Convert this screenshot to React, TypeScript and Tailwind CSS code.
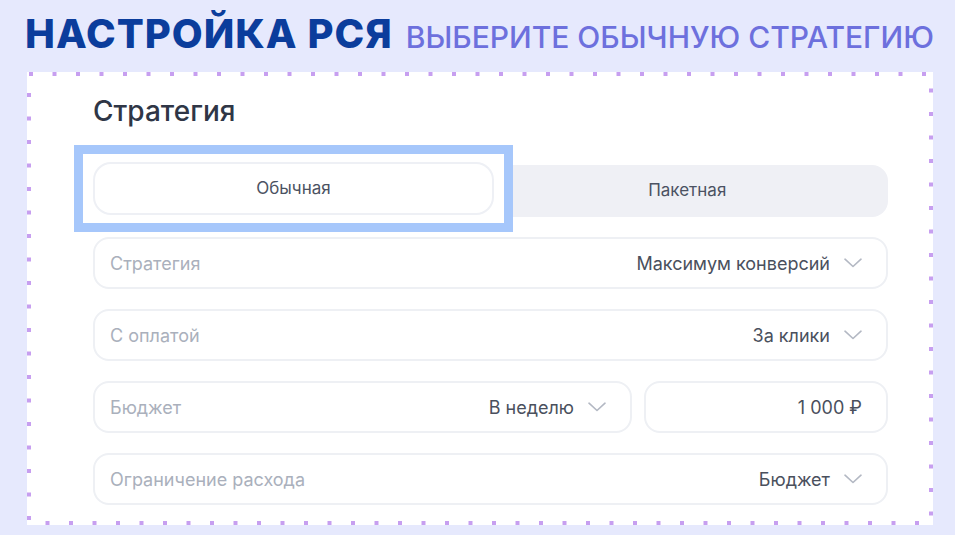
import { ReactNode } from "react";

function Chevron() {
  return (
    <svg width="18" height="10" viewBox="0 0 18 10" fill="none" className="shrink-0">
      <path d="M1 1.2l8 7.3 8-7.3" stroke="#b3b8c3" strokeWidth="1.6" strokeLinecap="round" strokeLinejoin="round" />
    </svg>
  );
}

function Field({ label, children, className }: { label?: string; children: ReactNode; className?: string }) {
  return (
    <div
      className={
        "h-[52px] flex items-center justify-between rounded-[16px] border-2 border-[#eef0f4] bg-white pl-[15px] pr-[24px] " +
        (className || "")
      }
    >
      <span className="text-[#aab0bc]">{label}</span>
      <div className="flex items-center gap-[14px] text-[#4a505d]">{children}</div>
    </div>
  );
}

function App() {
  return (
    <div
      className="w-[955px] h-[535px] overflow-hidden bg-[#e6e9fd] pt-[14px]"
      style={{ fontFamily: "Inter, 'Noto Sans', sans-serif" }}
    >
      <div className="flex items-baseline gap-[13px] pl-[25px] h-[58px]">
        <h1 className="text-[40px] font-extrabold text-[#0b3d9c] tracking-[1px] leading-none">НАСТРОЙКА РСЯ</h1>
        <span className="text-[30px] font-medium text-[#6d70dd] leading-none">ВЫБЕРИТЕ ОБЫЧНУЮ СТРАТЕГИЮ</span>
      </div>

      <div className="relative ml-[27px] w-[906px] h-[453px] bg-white pl-[66px] pr-[45px] pt-[22px] text-[18px]">
        <svg className="absolute inset-0 pointer-events-none" width="906" height="453">
          <rect
            x="2"
            y="2"
            width="902"
            height="449"
            fill="none"
            stroke="#c79ff0"
            strokeWidth="4"
            strokeDasharray="4 19.5"
          />
        </svg>

        <h2 className="text-[28px] font-medium text-[#2f3646] leading-[34px]">Стратегия</h2>

        <div className="relative mt-[37px] h-[52px] rounded-[16px] bg-[#eff0f5] grid grid-cols-2 p-[4px] text-[17px]">
          <div className="rounded-[14px] bg-white" />
          <div className="flex items-center justify-center text-[#4b5262]">Пакетная</div>
          <div className="absolute left-[-19px] top-[-20px] w-[439px] h-[87px] border-[9px] border-[#a6c7fb] bg-white flex items-center justify-center">
            <div className="w-[397px] h-[49px] rounded-[16px] ring-2 ring-[#eef0f5] flex items-center justify-center text-[#4b5262]">
              Обычная
            </div>
          </div>
        </div>

        <div className="mt-[20px] flex flex-col gap-[20px]">
          <Field label="Стратегия">
            <span>Максимум конверсий</span>
            <Chevron />
          </Field>
          <Field label="С оплатой">
            <span>За клики</span>
            <Chevron />
          </Field>
          <div className="flex gap-[12px]">
            <Field label="Бюджет" className="w-[539px]">
              <span>В неделю</span>
              <Chevron />
            </Field>
            <Field className="flex-1 pr-[15px]">
              <span>1 000 ₽</span>
            </Field>
          </div>
          <Field label="Ограничение расхода">
            <span>Бюджет</span>
            <Chevron />
          </Field>
        </div>
      </div>
    </div>
  );
}

export default App;
